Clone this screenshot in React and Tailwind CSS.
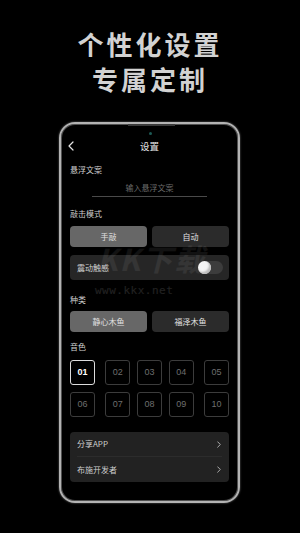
import React, { useState } from "react";

const Chevron = ({ className }) => (
  <svg viewBox="0 0 6 10" className={className} fill="none" stroke="currentColor" strokeWidth="1.2" strokeLinecap="round" strokeLinejoin="round">
    <path d="M1 1 L5 5 L1 9" />
  </svg>
);

const App = () => {
  const [mode, setMode] = useState("manual");
  const [kind, setKind] = useState("calm");
  const [tone, setTone] = useState("01");
  const [vibrate, setVibrate] = useState(true);

  const tones = ["01", "02", "03", "04", "05", "06", "07", "08", "09", "10"];

  return (
    <div className="w-[300px] h-[533px] bg-black overflow-hidden relative font-['Noto_Sans_CJK_SC',sans-serif]">
      {/* 标题 */}
      <div className="pt-[26px] text-center text-[26px] leading-[35px] font-bold text-[#d2d2d2] tracking-[3px]">
        <div>个性化设置</div>
        <div>专属定制</div>
      </div>

      {/* 手机外框 */}
      <div className="relative mt-[26px] ml-[59px] w-[181px] h-[381px] rounded-[16px] border-2 border-[#b3b3b3] shadow-[inset_0_0_0_1px_#505050,0_0_2px_#777] px-[9px]">
        <div className="absolute top-0 left-[67px] w-[47px] h-[2px] bg-[#3a3a3a]" />
        <div className="absolute top-[8px] left-[88px] w-[3px] h-[3px] rounded-full bg-[#1d5a55]" />

        {/* 顶栏 */}
        <div className="mt-[14px] h-[16px] relative flex items-center justify-center">
          <Chevron className="absolute left-[-2px] w-[6px] h-[10px] text-[#e5e5e5] rotate-180" />
          <span className="text-[9.5px] text-[#e5e5e5]">设置</span>
        </div>

        {/* 悬浮文案 */}
        <div className="mt-[10px] text-[8px] leading-[12px] text-[#d0d0d0]">悬浮文案</div>
        <div className="mt-[3px] mx-[22px] h-[18px] border-b border-[#4a4a4a] flex items-center justify-center text-[8px] text-[#6a6a6a]">
          输入悬浮文案
        </div>

        {/* 敲击模式 */}
        <div className="mt-[11px] text-[8px] leading-[12px] text-[#d0d0d0]">敲击模式</div>
        <div className="mt-[6px] flex justify-between">
          <button
            onClick={() => setMode("manual")}
            className={`w-[77px] h-[21px] rounded-[4px] text-[8px] text-[#e0e0e0] ${mode === "manual" ? "bg-[#676767]" : "bg-[#2b2b2b]"}`}
          >
            手敲
          </button>
          <button
            onClick={() => setMode("auto")}
            className={`w-[77px] h-[21px] rounded-[4px] text-[8px] text-[#e0e0e0] ${mode === "auto" ? "bg-[#676767]" : "bg-[#2b2b2b]"}`}
          >
            自动
          </button>
        </div>

        {/* 震动触感 */}
        <div className="mt-[8px] h-[25px] rounded-[4px] bg-[#262626] flex items-center justify-between pl-[7px] pr-[6px]">
          <span className="text-[8px] text-[#d0d0d0]">震动触感</span>
          <button
            onClick={() => setVibrate(!vibrate)}
            className="w-[25px] h-[13px] rounded-full bg-[#3c3c3c] flex items-center"
          >
            <span className="w-[13px] h-[13px] rounded-full bg-[#f4f4f4] shadow-[inset_-2px_-2px_2px_#bbb]" />
          </button>
        </div>

        {/* 种类 */}
        <div className="mt-[14px] text-[8px] leading-[12px] text-[#d0d0d0]">种类</div>
        <div className="mt-[5px] flex justify-between">
          <button
            onClick={() => setKind("calm")}
            className={`w-[77px] h-[21px] rounded-[4px] text-[8px] text-[#e0e0e0] ${kind === "calm" ? "bg-[#676767]" : "bg-[#2b2b2b]"}`}
          >
            静心木鱼
          </button>
          <button
            onClick={() => setKind("bless")}
            className={`w-[77px] h-[21px] rounded-[4px] text-[8px] text-[#e0e0e0] ${kind === "bless" ? "bg-[#676767]" : "bg-[#2b2b2b]"}`}
          >
            福泽木鱼
          </button>
        </div>

        {/* 音色 */}
        <div className="mt-[9px] text-[8px] leading-[12px] text-[#d0d0d0]">音色</div>
        <div className="mt-[7px] grid grid-cols-5 gap-y-[7px] justify-between">
          {tones.map((n, i) => (
            <button
              key={n}
              onClick={() => setTone(n)}
              className={`w-[25px] h-[25px] rounded-[3px] flex items-center justify-center text-[9px] font-['Liberation_Sans',sans-serif] ${
                i % 5 === 0 ? "justify-self-start" : i % 5 === 4 ? "justify-self-end" : "justify-self-center"
              } ${tone === n ? "border-[1.5px] border-[#dcdcdc] text-white font-bold" : "border border-[#3c3c3c] text-[#6e6e6e]"}`}
            >
              {n}
            </button>
          ))}
        </div>

        {/* 列表 */}
        <div className="mt-[15px] rounded-[4px] bg-[#222222] px-[7px]">
          <div className="h-[25px] flex items-center justify-between border-b border-[#2c2c2c]">
            <span className="text-[8px] text-[#cfcfcf]">分享APP</span>
            <Chevron className="w-[4px] h-[7px] text-[#cfcfcf] mr-[1px]" />
          </div>
          <div className="h-[25px] flex items-center justify-between">
            <span className="text-[8px] text-[#cfcfcf]">布施开发者</span>
            <Chevron className="w-[4px] h-[7px] text-[#cfcfcf] mr-[1px]" />
          </div>
        </div>
      </div>

      {/* 水印 */}
      <div className="absolute left-[97px] top-[236px] text-[30px] font-bold italic text-white/[0.07] tracking-[2px] pointer-events-none">
        KK下载
      </div>
      <div className="absolute left-[95px] top-[283px] text-[11px] font-['DejaVu_Sans_Mono',monospace] text-white/[0.13] tracking-[0.5px] pointer-events-none">
        www.kkx.net
      </div>
    </div>
  );
};

export default App;
